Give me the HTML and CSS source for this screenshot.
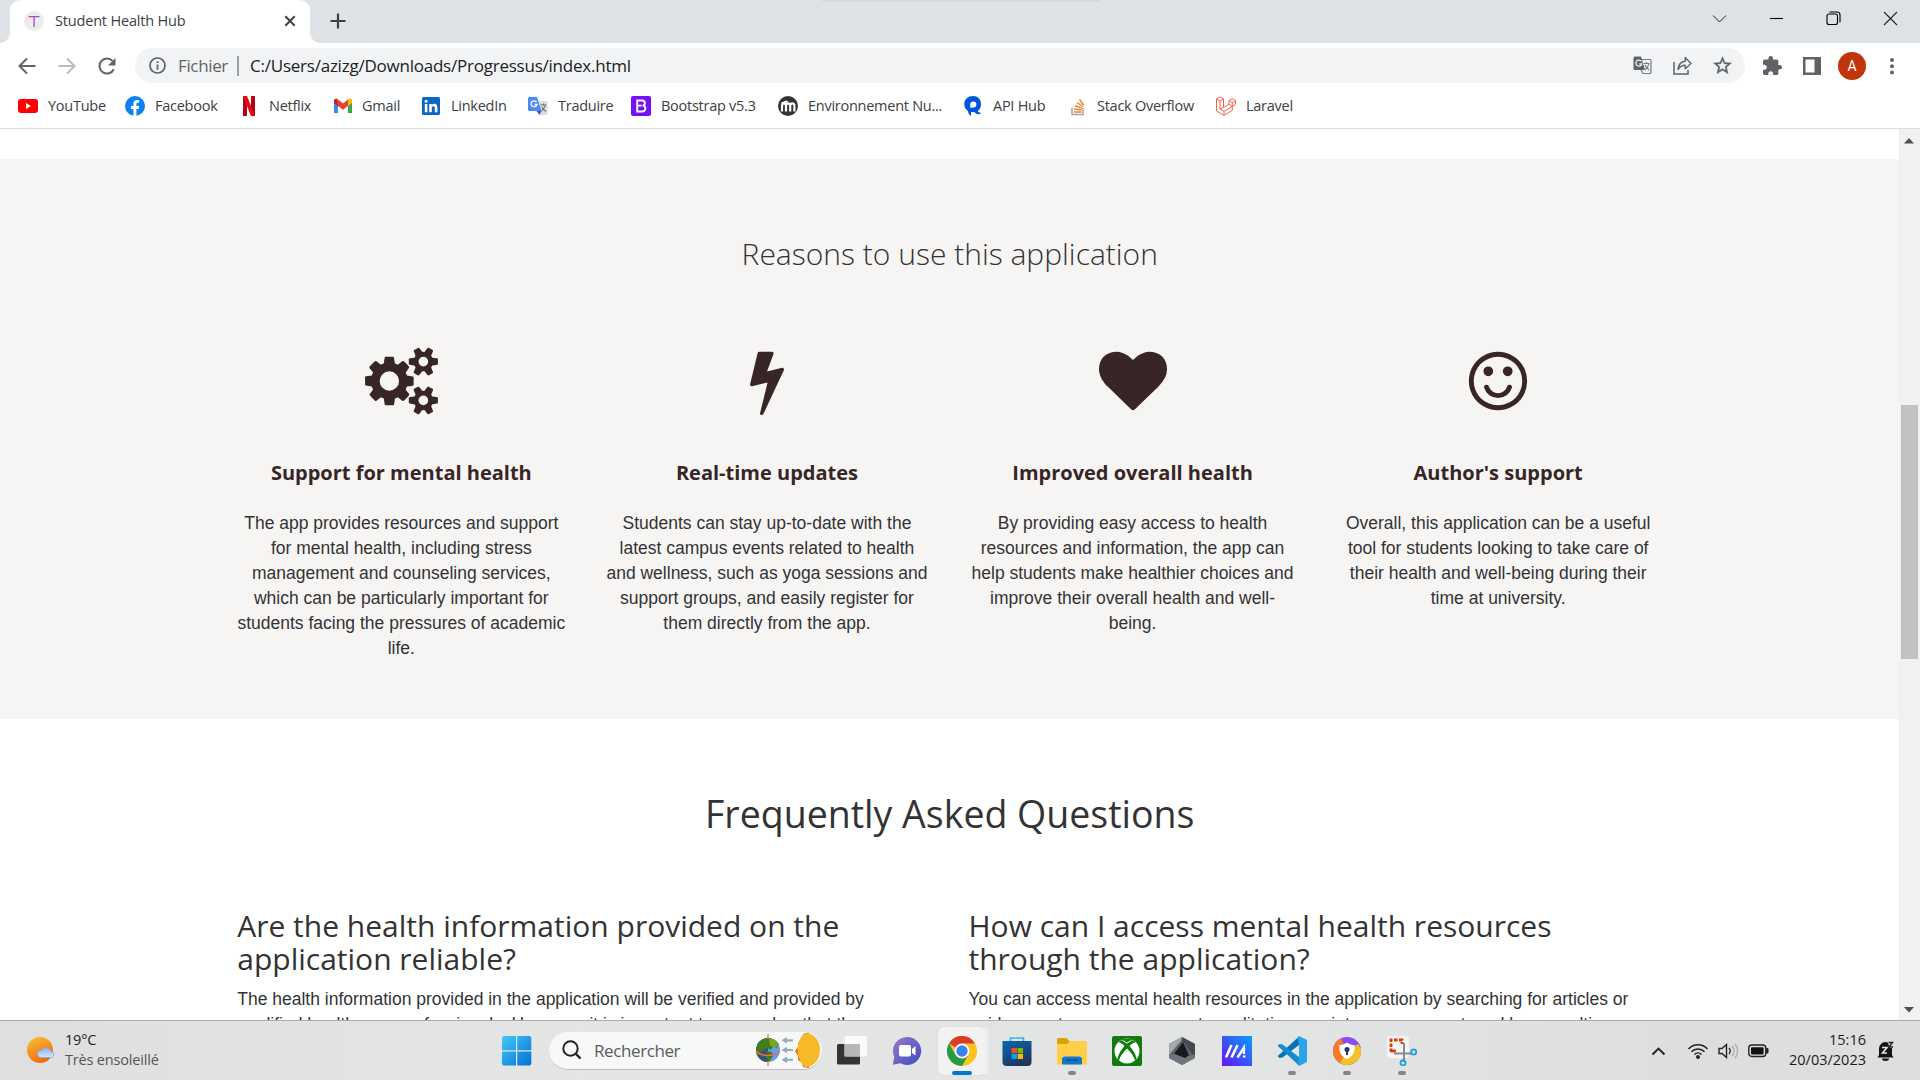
FILE: index.html
```html
<!DOCTYPE html>
<html lang="fr">
<head>
<meta charset="utf-8">
<title>Student Health Hub</title>
<link rel="stylesheet" href="styles.css">
</head>
<body>
<div class="screen">
  <header class="tabstrip">
    <div class="tab">
      <span class="favicon"><svg width="20" height="20" viewBox="0 0 20 20"><defs><linearGradient id="tg" x1="0" x2="1"><stop offset="0" stop-color="#e0359f"/><stop offset="1" stop-color="#6a5cff"/></linearGradient></defs><circle cx="10" cy="10" r="10" fill="#ececee"/><path d="M4.500 5h11v1.300H4.500z M9.400 6h1.300v10H9.400z" fill="url(#tg)"/></svg></span>
      <span class="tab-title">Student Health Hub</span>
      <svg class="tab-close" width="12" height="12" viewBox="0 0 12 12"><path d="M1.300 1.300l9.400 9.400M10.700 1.300L1.300 10.700" stroke="#3c4043" stroke-width="2"/></svg>
    </div>
    <svg class="new-tab" width="16" height="16" viewBox="0 0 16 16"><path d="M8 .5v15M.5 8h15" stroke="#3c4043" stroke-width="2.200"/></svg>
    <span class="snap-hint"></span>
    <div class="window-buttons">
      <svg width="15" height="15" viewBox="0 0 15 15"><path d="M1 4.500l6.500 6.500L14 4.500" fill="none" stroke="#222"/></svg>
      <svg width="15" height="15" viewBox="0 0 15 15"><path d="M1 7.500h13" stroke="#000" stroke-width="1.100"/></svg>
      <svg width="15" height="15" viewBox="0 0 15 15"><g fill="none" stroke="#000" stroke-width="1.100"><rect x="1" y="3" width="10.500" height="10.500" rx="2"/><path d="M3.500 1h7.500a3 3 0 0 1 3 3v7.500"/></g></svg>
      <svg width="15" height="15" viewBox="0 0 15 15"><path d="M1 1l13 13M14 1L1 14" stroke="#222" stroke-width="1.100"/></svg>
    </div>
  </header>

  <div class="toolbar">
    <div class="nav">
      <svg width="18" height="18" viewBox="0 0 18 18"><path d="M17.500 9H2M9 1.500L1.500 9 9 16.500" fill="none" stroke="#5f6368" stroke-width="2"/></svg>
      <svg width="18" height="18" viewBox="0 0 18 18"><path d="M.5 9H16M9 1.500L16.500 9 9 16.500" fill="none" stroke="#babcbe" stroke-width="2"/></svg>
      <svg width="18" height="18" viewBox="0 0 18 18"><path d="M15.800 12.200A7.500 7.500 0 1 1 14.500 3.900" fill="none" stroke="#5f6368" stroke-width="2"/><path d="M17.500 1v7.500H10z" fill="#5f6368"/></svg>
    </div>
    <div class="omnibox">
      <svg width="17" height="17" viewBox="0 0 17 17"><circle cx="8.500" cy="8.500" r="7.500" fill="none" stroke="#5f6368" stroke-width="1.700"/><path d="M7.600 4.300h1.800v1.800H7.600zM7.600 7.500h1.800v5.200H7.600z" fill="#5f6368"/></svg>
      <span class="scheme">Fichier</span>
      <span class="divider"></span>
      <span class="url">C:/Users/azizg/Downloads/Progressus/index.html</span>
      <div class="omni-actions">
        <svg width="19" height="19" viewBox="0 0 19 19"><path d="M8 3.500h9a1 1 0 0 1 1 1v12a1 1 0 0 1-1 1h-7L8 14" fill="none" stroke="#777b80" stroke-width="1.200"/><path d="M2 .5h6l4 13.500H2A1.500 1.500 0 0 1 .5 12.500V2A1.500 1.500 0 0 1 2 .5z" fill="#5f6368"/><path d="M8.300 5.300A3 3 0 1 0 8.800 7.800H6.200" fill="none" stroke="#f1f3f4" stroke-width="1.300"/><path d="M10.500 7.500h6M13.500 6v1.500M15.800 8c-.5 2.500-2 4.500-4 6M12 9c.8 2 2.200 3.500 4.200 5" fill="none" stroke="#777b80" stroke-width="1.100"/></svg>
        <svg width="19" height="19" viewBox="0 0 19 19"><path d="M1 6v12h14v-4" fill="none" stroke="#5f6368" stroke-width="1.500"/><path d="M5 13.500C5.500 8.500 8 5.500 12.200 5.200V1.500L18 7.500l-5.800 5.200V9.300C9 9.300 7 10.500 5 13.500z" fill="none" stroke="#5f6368" stroke-width="1.400" stroke-linejoin="round"/></svg>
        <svg width="19" height="19" viewBox="1.500 1.500 21 21"><path d="M22 9.240l-7.190-.62L12 2 9.190 8.630 2 9.240l5.460 4.730L5.820 21 12 17.270 18.180 21l-1.630-7.030L22 9.240zM12 15.400l-3.760 2.270 1-4.280-3.320-2.880 4.380-.38L12 6.100l1.710 4.040 4.380.38-3.320 2.880 1 4.280L12 15.400z" fill="#5f6368" stroke="#5f6368" stroke-width=".4"/></svg>
      </div>
    </div>
    <div class="extras">
      <svg width="19" height="19" viewBox="2 1 21 21"><path d="M20.500 11H19V7c0-1.100-.9-2-2-2h-4V3.500a2.500 2.500 0 0 0-5 0V5H4c-1.100 0-1.990.9-1.990 2v3.800H3.500c1.490 0 2.700 1.210 2.700 2.700s-1.210 2.700-2.700 2.700H2V20c0 1.100.9 2 2 2h3.800v-1.500c0-1.490 1.210-2.700 2.700-2.700s2.700 1.210 2.700 2.700V22H17c1.100 0 2-.9 2-2v-4h1.500a2.500 2.500 0 0 0 0-5z" fill="#5f6368"/></svg>
      <svg width="18" height="18" viewBox="0 0 18 18"><path d="M0 0h18v18H0zM2.500 2.500v13h9v-13z" fill="#5f6368" fill-rule="evenodd"/></svg>
      <span class="avatar">A</span>
      <svg width="4" height="18" viewBox="0 0 4 18"><g fill="#5f6368"><circle cx="2" cy="3" r="2"/><circle cx="2" cy="9.200" r="2"/><circle cx="2" cy="15.400" r="2"/></g></svg>
    </div>
  </div>

  <nav class="bookmarks">
    <a><svg width="20" height="20" viewBox="0 0 20 20"><rect y="3" width="20" height="14" rx="3" fill="#f00"/><path d="M8 7l5 3-5 3z" fill="#fff"/></svg><span>YouTube</span></a>
    <a><svg width="20" height="20" viewBox="0 0 20 20"><circle cx="10" cy="10" r="10" fill="#0d80f2"/><path d="M8.400 20v-7H6v-3h2.400V8c0-2.600 1.500-4 3.800-4 1 0 1.900.2 1.900.2v2.500h-1.200c-1.200 0-1.500.7-1.500 1.500V10h2.700l-.5 3h-2.200v7z" fill="#fff"/></svg><span>Facebook</span></a>
    <a><svg width="20" height="20" viewBox="0 0 20 20"><path d="M4 0h4v20H4zM12 0h4v20h-4z" fill="#b20710"/><path d="M4 0h4l8 20h-4z" fill="#e50914"/></svg><span>Netflix</span></a>
    <a><svg width="20" height="20" viewBox="-1 0 20 20"><path d="M1 5v12h4V8z" fill="#4285f4"/><path d="M19 5v12h-4V8z" fill="#34a853"/><path d="M1 5c0-2.400 2.500-2.700 4-1.500l5 4 5-4c1.500-1.200 4-.9 4 1.500v2l-9 6.800L1 7z" fill="#ea4335"/><path d="M15 3.500c1.500-1.200 4-.9 4 1.500v2l-4 3z" fill="#fbbc04"/><path d="M1 5c0-2 1.700-2.500 2.800-2L5 10 1 7z" fill="#c5221f"/></svg><span>Gmail</span></a>
    <a><svg width="20" height="20" viewBox="0 0 20 20"><rect x="1" y="1" width="18" height="18" rx="1.500" fill="#0a66c2"/><path d="M3.800 8h2.600v8.300H3.800zM8.200 8h2.500v1.200c1.500-2.200 5.700-1.900 5.700 2.100v5h-2.600v-4.500c0-2.300-3-2.100-3 0v4.500H8.200z" fill="#fff"/><circle cx="5.100" cy="5.200" r="1.500" fill="#fff"/></svg><span>LinkedIn</span></a>
    <a><svg width="20" height="20" viewBox="0 0 20 20"><path d="M8 5h10.500a1 1 0 0 1 1 1v12a1 1 0 0 1-1 1H12z" fill="#dcdcdc"/><path d="M1.500 1H9l4.500 14H1.500A1.500 1.500 0 0 1 0 13.500v-11A1.500 1.500 0 0 1 1.500 1z" fill="#4c8bf5"/><path d="M8.500 15h5L11.500 19z" fill="#3a5dbb"/><path d="M8.500 6A3 3 0 1 0 9 8.500H6.500" fill="none" stroke="#fff" stroke-width="1.300"/><path d="M12.500 9h6M15.500 7.500V9M17.500 9c-.5 2.500-2 4-4 6M14 11c.8 2 2 3 4 4.500" fill="none" stroke="#6b7177" stroke-width="1.100"/></svg><span>Traduire</span></a>
    <a><svg width="20" height="20" viewBox="0 0 20 20"><rect width="20" height="20" rx="2" fill="#7611f7"/><path d="M6.200 4.500h4.600c4 0 3.800 4.500 1 5 3.600.6 3.600 6-1 6H6.200zM6.200 9.600h4.500" fill="none" stroke="#fff" stroke-width="1.900"/></svg><span>Bootstrap v5.3</span></a>
    <a><svg width="20" height="20" viewBox="0 0 20 20"><circle cx="10" cy="10" r="10" fill="#333"/><path d="M4 15.500V10c0-3.500 4-3.500 4 0v5.500M8 10c0-3.500 4.200-3.500 4.200 0v5.500M12.200 10c0-3.500 4.200-3.500 4.200 0v5.500" fill="none" stroke="#fff" stroke-width="2.200"/><path d="M2.500 7L8 4.500l2.500 1L6 8z" fill="#fff"/></svg><span>Environnement Nu...</span></a>
    <a><svg width="20" height="20" viewBox="0 0 20 20"><path d="M10 0c5 0 8 3.300 8 8.200 0 3-1 5.200-3.300 6.800.7 1.500 2 1.800 3.300 1.700-1 2-4.500 2.200-6.300-.4L8 16v4c-2-1-2.800-3-3-5-2.500-1.500-3.700-4-3.700-7C1.300 3.300 5 0 10 0z" fill="#0055da"/><path d="M8 11V8.500a2.300 2.300 0 1 1 2.500 2.300z" fill="#fff" stroke="#fff" stroke-width="1.500"/></svg><span>API Hub</span></a>
    <a><svg width="20" height="20" viewBox="-1 0 20 20"><path d="M4 12v6.500h11V12" fill="none" stroke="#9ea5ac" stroke-width="1.500"/><path d="M6 16h7.500M6.200 13l7.400 1M7 9.700l7 2.400M8.800 6.500l6 4M11.500 3.500l4.200 5.700" stroke="#f48024" stroke-width="1.500"/></svg><span>Stack Overflow</span></a>
    <a><svg width="20" height="20" viewBox="0 0 20 20"><path d="M.5 3L4 1l3.500 2v8.500l5.500-3.200V4.500l3.300-2 3.200 2v4l-3.200 2v3.800L8 19.300.5 15zM.5 3L4 5l3.500-2M4 5v8l4 2.300 8.300-4.800L13 8.300M8 15.300v4M4 13l3.500-1.500M13 4.500l3.300 2 3.200-2M16.300 6.500v4" fill="none" stroke="#f9614f" stroke-width="1" stroke-linejoin="round"/></svg><span>Laravel</span></a>
  </nav>

  <div class="viewport">
    <main class="page">
      <section class="reasons">
        <h2>Reasons to use this application</h2>
        <div class="features">
          <article>
            <svg width="73" height="68" viewBox="-64 0 1920 1792"><path d="M832 896q0-106-75-181t-181-75-181 75-75 181 75 181 181 75 181-75 75-181zm768 512q0-52-38-90t-90-38-90 38-38 90q0 53 37.500 90.500t90.500 37.500 90.500-37.500 37.500-90.500zm0-1024q0-52-38-90t-90-38-90 38-38 90q0 53 37.500 90.500t90.500 37.500 90.500-37.500 37.500-90.500zm-384 421v185q0 10-7 19.500t-16 10.500l-155 24q-11 35-32 76 34 48 90 115 7 11 7 20 0 12-7 19-23 30-82.500 89.500t-78.500 59.500q-11 0-21-7l-115-90q-37 19-77 31-11 108-23 155-7 24-30 24h-186q-11 0-20-7.500t-10-17.500l-23-153q-34-10-75-31l-118 89q-7 7-20 7-11 0-21-8-144-133-144-160 0-9 7-19 10-14 41-53t47-61q-23-44-35-82l-152-24q-10-1-17-9.500t-7-19.500v-185q0-10 7-19.500t16-10.500l155-24q11-35 32-76-34-48-90-115-7-11-7-20 0-12 7-20 22-30 82-89t79-59q11 0 21 7l115 90q34-18 77-32 11-108 23-154 7-24 30-24h186q11 0 20 7.500t10 17.500l23 153q34 10 75 31l118-89q8-7 20-7 11 0 21 8 144 133 144 160 0 8-7 19-12 16-42 54t-45 60q23 48 34 82l152 23q10 2 17 10.500t7 19.500zm640 533v140q0 16-149 31-12 27-30 52 51 113 51 138 0 4-4 7-122 71-124 71-8 0-46-47t-52-68q-20 2-30 2t-30-2q-14 21-52 68t-46 47q-2 0-124-71-4-3-4-7 0-25 51-138-18-25-30-52-149-15-149-31v-140q0-16 149-31 13-29 30-52-51-113-51-138 0-4 4-7 4-2 35-20t59-34 30-16q8 0 46 46.500t52 67.500q20-2 30-2t30 2q51-71 92-112l6-2q4 0 124 70 4 3 4 7 0 25-51 138 17 23 30 52 149 15 149 31zm0-1024v140q0 16-149 31-12 27-30 52 51 113 51 138 0 4-4 7-122 71-124 71-8 0-46-47t-52-68q-20 2-30 2t-30-2q-14 21-52 68t-46 47q-2 0-124-71-4-3-4-7 0-25 51-138-18-25-30-52-149-15-149-31v-140q0-16 149-31 13-29 30-52-51-113-51-138 0-4 4-7 4-2 35-20t59-34 30-16q8 0 46 46.500t52 67.500q20-2 30-2t30 2q51-71 92-112l6-2q4 0 124 70 4 3 4 7 0 25-51 138 17 23 30 52 149 15 149 31z"/></svg>
            <h4>Support for mental health</h4>
            <p>The app provides resources and support for mental health, including stress management and counseling services, which can be particularly important for students facing the pressures of academic life.</p>
          </article>
          <article>
            <svg width="68" height="68" viewBox="0 0 1792 1792"><path d="M1333 566q18 20 7 44l-540 1157q-13 25-42 25-4 0-14-2-17-5-25.500-19t-4.500-30l197-808-406 101q-4 1-12 1-18 0-31-11-18-15-13-39l201-825q4-16 17-26.500t32-10.500h328q19 0 32 12.500t13 29.500q0 8-5 18l-171 463 396-98q8-2 12-2 19 0 34 15z"/></svg>
            <h4>Real-time updates</h4>
            <p>Students can stay up-to-date with the latest campus events related to health and wellness, such as yoga sessions and support groups, and easily register for them directly from the app.</p>
          </article>
          <article>
            <svg width="68" height="68" viewBox="0 0 1792 1792"><path d="M896 1664q-26 0-44-18l-624-602q-10-8-27.500-26t-55.500-65.500-68-97.500-53.500-121-23.500-138q0-220 127-344t351-124q62 0 126.500 21.500t120 58 95.500 68.500 76 68q36-36 76-68t95.500-68.500 120-58 126.500-21.500q224 0 351 124t127 344q0 221-229 450l-623 600q-18 18-44 18z"/></svg>
            <h4>Improved overall health</h4>
            <p>By providing easy access to health resources and information, the app can help students make healthier choices and improve their overall health and well-being.</p>
          </article>
          <article>
            <svg width="68" height="68" viewBox="0 0 1792 1792"><path d="M1262 1075q-37 121-138 195t-228 74-228-74-138-195q-8-25 4-48.500t38-31.500q25-8 48.500 4t31.500 38q25 80 92.500 129.500t151.500 49.500 151.500-49.500 92.500-129.500q8-26 32-38t49-4 37 31.500 4 48.500zm-494-435q0 53-37.500 90.500t-90.500 37.500-90.500-37.500-37.500-90.500 37.500-90.500 90.500-37.500 90.500 37.500 37.500 90.500zm512 0q0 53-37.500 90.500t-90.500 37.500-90.500-37.500-37.500-90.500 37.500-90.500 90.500-37.500 90.500 37.500 37.500 90.500zm256 256q0-130-51-248.500t-136.500-204-204-136.500-248.500-51-248.500 51-204 136.500-136.500 204-51 248.500 51 248.500 136.500 204 204 136.500 248.500 51 248.500-51 204-136.500 136.500-204 51-248.500zm128 0q0 209-103 385.500t-279.500 279.500-385.500 103-385.500-103-279.500-279.500-103-385.500 103-385.500 279.500-279.500 385.500-103 385.500 103 279.500 279.500 103 385.500z"/></svg>
            <h4>Author's support</h4>
            <p>Overall, this application can be a useful tool for students looking to take care of their health and well-being during their time at university.</p>
          </article>
        </div>
      </section>
      <section class="faq">
        <h2>Frequently Asked Questions</h2>
        <div class="questions">
          <article>
            <h3>Are the health information provided on the application reliable?</h3>
            <p>The health information provided in the application will be verified and provided by<br>qualified health care professionals. However, it is important to remember that the</p>
          </article>
          <article>
            <h3>How can I access mental health resources through the application?</h3>
            <p>You can access mental health resources in the application by searching for articles or<br>guides on stress management, meditation, anxiety management, and by consulting</p>
          </article>
        </div>
      </section>
    </main>
    <aside class="scrollbar">
      <svg width="10" height="6" viewBox="0 0 10 6"><path d="M5 0l5 5.500H0z" fill="#505050"/></svg>
      <span class="thumb"></span>
      <svg class="down" width="10" height="6" viewBox="0 0 10 6"><path d="M5 5.500L10 0H0z" fill="#505050"/></svg>
    </aside>
  </div>

  <footer class="taskbar">
    <div class="weather">
      <svg width="29" height="28" viewBox="0 0 29 28"><defs><linearGradient id="sun" x1=".2" x2=".7" y2="1"><stop offset="0" stop-color="#f5bd35"/><stop offset="1" stop-color="#f0650a"/></linearGradient><linearGradient id="cl" x2="0" y2="1"><stop offset="0" stop-color="#8eb4ee"/><stop offset="1" stop-color="#d7e6ff"/></linearGradient></defs><circle cx="13" cy="13" r="13" fill="url(#sun)"/><path d="M14 20.500a3.500 3.500 0 0 1 0-7 6 6 0 0 1 10.500 1.300 3 3 0 0 1 .5 5.700z" fill="url(#cl)" stroke="#7da5e6" stroke-width=".7"/></svg>
      <div class="forecast"><div class="temp">19°C</div><div class="cond">Très ensoleillé</div></div>
    </div>
    <div class="apps">
      <svg class="start" width="30" height="30" viewBox="0 0 30 30"><defs><linearGradient id="win" x2="1" y2="1"><stop offset="0" stop-color="#45c8fa"/><stop offset="1" stop-color="#0271d2"/></linearGradient></defs><path d="M1.500 0H14v14.200H0V1.500zM15.200 0h12.600l1.500 1.500v12.700H15.200zM0 15.500h14v14H1.500L0 28zM15.200 15.500h14.100V28l-1.500 1.500H15.200z" fill="url(#win)"/></svg>
      <div class="search">
        <svg width="20" height="20" viewBox="0 0 20 20"><circle cx="8.500" cy="8.500" r="7.200" fill="none" stroke="#222" stroke-width="2"/><path d="M13.500 13.500l5 5" stroke="#222" stroke-width="2.400"/></svg>
        <span>Rechercher</span>
        <svg class="doodle" width="67" height="38" viewBox="0 0 67 38"><defs><clipPath id="globe"><circle cx="13" cy="19" r="12"/></clipPath></defs><circle cx="13" cy="19" r="12" fill="#659ee6"/><g clip-path="url(#globe)"><path d="M0 6h13v26H0z" fill="#375378"/><path d="M2 15l4-7 7-2 7 0 5 6-3 5-4-2-2 4-4-2-3 2-5 3-1 4-3-3zM12 20l5 1 1 4-4 6-3-5z" fill="#3f7d1d"/><path d="M14 8l6-1 5 7-4 2-6-1z" fill="#7fa51d"/></g><path d="M13 3v5M13 30v5M1 20c5 6 18 6 24 0" fill="none" stroke="#ee6b50" stroke-width="1.300"/><path d="M38 8.300h-6V6l-5.500 3.300 5.500 3.300v-2h6zM38 18h-6v-2.300L26.500 19l5.500 3.300V20h6zM38 27.700h-6v-2.300l-5.500 3.300L32 32v-2.300h6z" fill="#92aac6"/><path d="M54 1l-6 2-1 5-4 4 0 4-3 4 3 5 0 4 4 3 1 4 6 1z" fill="#e96a12"/><path d="M50 2C70 2 70 36 50 36 40 28 40 10 50 2z" fill="#f6b92a"/></svg>
      </div>
      <div class="app"><svg width="30" height="30" viewBox="0 0 30 30"><rect y="8" width="23" height="20.500" rx="1.500" fill="#333"/><rect x="7.500" y="0" width="22.500" height="20.500" rx="1.500" fill="#fff" opacity=".8"/><path d="M7.500 8H23v12.500H7.500z" fill="#b6b6b6"/></svg></div>
      <div class="app"><svg width="30" height="30" viewBox="0 0 30 30"><defs><linearGradient id="chat" x2="1" y2="1"><stop offset="0" stop-color="#9b7ac5"/><stop offset="1" stop-color="#3e4ac4"/></linearGradient></defs><path d="M15 1a14 14 0 1 1-6.500 26.300L.8 28.700 2.300 21A14 14 0 0 1 15 1z" fill="url(#chat)"/><rect x="7" y="9" width="12" height="11.500" rx="2" fill="#fff"/><path d="M20 13l3.500-3v9.500L20 17z" fill="#fff"/></svg></div>
      <div class="app active"><svg width="30" height="30" viewBox="0 0 30 30"><circle cx="15" cy="15" r="15" fill="#fcc31e"/><path d="M15 15L2 7.500A15 15 0 0 1 28 7.500H15z" fill="#dc3a2d"/><path d="M2 7.500A15 15 0 0 0 15 30l6.500-11.200L15 15l-6.500 3.800z" fill="#269a48"/><circle cx="15" cy="15" r="7.500" fill="#fff"/><circle cx="15" cy="15" r="5.700" fill="#3c82f0"/></svg></div>
      <div class="app"><svg width="30" height="30" viewBox="0 0 30 30"><defs><linearGradient id="store" x2=".5" y2="1"><stop offset="0" stop-color="#0a66b2"/><stop offset="1" stop-color="#20365f"/></linearGradient></defs><path d="M8.500 6V2h13v4" fill="none" stroke="#2eb5f0" stroke-width="1.700"/><path d="M.5 5h29v21a4 4 0 0 1-4 4h-21a4 4 0 0 1-4-4z" fill="url(#store)"/><path d="M9.500 12H15v5.200H9.500z" fill="#f25022"/><path d="M15.700 12h5.300v5.200h-5.300z" fill="#7fba00"/><path d="M9.500 17.900H15V23H9.500z" fill="#00a4ef"/><path d="M15.700 17.900h5.300V23h-5.300z" fill="#ffb900"/></svg></div>
      <div class="app running"><svg width="30" height="30" viewBox="0 0 30 30"><path d="M0 3.500a1.500 1.500 0 0 1 1.500-1.500h8l3 3H29v10H0z" fill="#dda108"/><path d="M0 8h10l3-3h17v23.500H0z" fill="#ffcf48"/><path d="M5 28.500v-5a3 3 0 0 1 3-3h14a3 3 0 0 1 3 3v5z" fill="#0f76cc"/><path d="M9 24.300h12" stroke="#0b4d92" stroke-width="1.500"/></svg></div>
      <div class="app"><svg width="30" height="30" viewBox="0 0 30 30"><rect width="30" height="30" rx="2" fill="#107c10"/><circle cx="15" cy="15" r="12.500" fill="#fff"/><path d="M8 4.500c3-1 5.500 1 7 2.200 1.500-1.200 4-3.200 7-2.200 -2-2.500-12-2.500-14 0zM15 10c-4 3.500-8 8-8.500 14 2-5 5-8.500 8.500-11.500 3.500 3 6.500 6.500 8.500 11.500C23 18 19 13.500 15 10zM6.500 6.500c2.500 0 4.500 2 6 3.500C9 14 6 18.500 5.500 23l1.500 1.500C8 20 11.500 16 15 12.500c3.500 3.500 7 7.500 8 12l1.500-1.500C24 18.500 21 14 17.500 10c1.500-1.500 3.500-3.500 6-3.500L22 4.500c-3 0-5.500 2-7 3.300C13.500 6.500 11 4.500 8 4.500z" fill="#107c10"/></svg></div>
      <div class="app"><svg width="30" height="30" viewBox="0 0 30 30"><path d="M15 1l13 7v14l-13 7-13-7V8z" fill="#5d6268"/><path d="M15 1L2 8v11L14 5z" fill="#a2a8ad"/><path d="M15 1l13 7v14L16 5z" fill="#454b51"/><path d="M16 6l6 13.500-4 2.500L7 18z" fill="#17191c"/><path d="M2 19l5-1 11 4 4-2.500 6-1V22l-13 7-13-7z" fill="#6f757b"/></svg></div>
      <div class="app"><svg width="30" height="30" viewBox="0 0 30 30"><defs><linearGradient id="asus" x1="0" y1="1" x2="1" y2="0"><stop offset="0" stop-color="#6712fa"/><stop offset="1" stop-color="#079ffc"/></linearGradient></defs><path d="M0 0h30v30H0z" fill="url(#asus)"/><path d="M4 21.500L9.500 9M9.500 21.500L15.500 9" stroke="#fff" stroke-width="2.600"/><path d="M15.500 21.500L22 11.500V18" fill="none" stroke="#fff" stroke-width="2.300"/><circle cx="22.200" cy="20.500" r="1.300" fill="#fff"/></svg></div>
      <div class="app running"><svg width="30" height="30" viewBox="0 0 30 30"><path d="M22 .5L3 18 .5 20l2 2 3-.5L22 9z" fill="#0874b8"/><path d="M22 29.500L3 12 .5 10l2-2 3 .5L22 21z" fill="#168ccc"/><path d="M22 0l8 4v22l-8 4-1.500-1.500L22 22V8l-1.500-6.500z" fill="#28a4ea"/></svg></div>
      <div class="app running"><svg width="30" height="30" viewBox="0 0 30 30"><circle cx="15" cy="15" r="14" fill="#8a4cf0"/><path d="M1 15A14 14 0 0 1 9 2.500L15 15l-5 13A14 14 0 0 1 1 15z" fill="#fb7a25"/><path d="M29 13a14 14 0 0 1-21 14L15 15l11-7z" fill="#f3c128"/><path d="M15 6.500c3 2 5 2.500 7.500 2.500.8 7-1.500 11.500-7.500 14-6-2.500-8.300-7-7.500-14 2.500 0 4.500-.5 7.500-2.500z" fill="#fff"/><circle cx="15" cy="13.500" r="2.500" fill="#2e3060"/><path d="M14 14h2v5h-2z" fill="#2e3060"/></svg></div>
      <div class="app running"><svg width="30" height="30" viewBox="0 0 30 30"><rect width="22" height="22" rx="3" fill="#f4f4f4"/><path d="M4 16V4h11v4" fill="none" stroke="#d83b01" stroke-width="2.800" stroke-dasharray="3.500 1.500"/><path d="M4 15h5" stroke="#d83b01" stroke-width="2.800"/><path d="M17 7v17M7 17.500h17" stroke="#858b90" stroke-width="2"/><g fill="none" stroke="#1c9de0" stroke-width="1.800"><circle cx="26.700" cy="16" r="2.600"/><circle cx="16" cy="27" r="2.500"/></g></svg></div>
    </div>
    <div class="tray">
      <svg width="15" height="10" viewBox="0 0 15 10"><path d="M1.500 8.500l6-6 6 6" fill="none" stroke="#222" stroke-width="1.900"/></svg>
      <svg class="wifi" width="22" height="18" viewBox="0 0 22 18"><g fill="none" stroke="#222" stroke-width="1.500"><path d="M1.500 7a13 13 0 0 1 19 0M4.500 9.800a9 9 0 0 1 13 0M7.500 12.500a5 5 0 0 1 7 0"/></g><circle cx="11" cy="15" r="2" fill="#222"/></svg>
      <svg class="volume" width="21" height="18" viewBox="0 0 21 18"><path d="M1 6.500h3L8.500 2.500v13L4 11.500H1z" fill="none" stroke="#222" stroke-width="1.400"/><path d="M11 6c1.500 1.800 1.500 4.200 0 6" fill="none" stroke="#222" stroke-width="1.300"/><path d="M14 4c2.600 3 2.600 7 0 10M17 2c3.500 4 3.500 10 0 14" fill="none" stroke="#aaa" stroke-width="1.300"/></svg>
      <svg class="battery" width="21" height="14" viewBox="0 0 21 14"><rect x=".8" y="1" width="17" height="11.500" rx="3" fill="none" stroke="#222" stroke-width="1.400"/><rect x="3" y="3.200" width="12.600" height="7.200" rx="1" fill="#111"/><path d="M18.500 4.500h1.500v4.500h-1.500z" fill="#222" stroke="#222"/></svg>
      <div class="clock"><div>15:16</div><div>20/03/2023</div></div>
      <svg class="bell" width="20" height="22" viewBox="0 0 20 22"><path d="M3 15V8.500a6.500 6.500 0 0 1 13 0V15l1.500 2.500h-16zM6 18.500h7a3.500 2.500 0 0 1-7 0z" fill="#151515"/><path d="M6 7.500h5L6.500 13H11" fill="none" stroke="#e5e5e5" stroke-width="1.600"/><path d="M11.500 1h7v7h-5z" fill="#dfdfdf"/><path d="M12.500 2.500h4L13 7h4" fill="none" stroke="#222" stroke-width="1.400"/></svg>
    </div>
  </footer>
</div>
</body>
</html>
```
FILE: styles.css
```css
* { box-sizing: border-box; }
body, h2, h3, h4, p { margin: 0; }
svg { display: block; flex: none; }
body { background: #fff; overflow: hidden; }
.screen {
  width: 1920px; height: 1080px; overflow: hidden;
  display: flex; flex-direction: column;
  font-family: "Open Sans", "Noto Sans", sans-serif; color: #3c4043;
}

/* tab strip */
.tabstrip { height: 43px; flex: none; display: flex; background: #dee1e6; padding-left: 10px; }
.tab {
  position: relative; width: 300px; height: 43px; padding: 0 14px 2px; background: #fff;
  border-radius: 10px 10px 0 0; display: flex; align-items: center; font-size: 14.5px;
}
.tab::before, .tab::after {
  content: ""; position: absolute; bottom: 0; width: 10px; height: 10px;
}
.tab::before { left: -10px; background: radial-gradient(circle at 0 0, transparent 9.5px, #fff 10px); }
.tab::after { right: -10px; background: radial-gradient(circle at 100% 0, transparent 9.5px, #fff 10px); }
.favicon { margin-right: 11px; }
.tab-title { letter-spacing: -.18px; }
.tab-close { margin-left: auto; }
.new-tab { margin: 13px 0 0 20px; }
.snap-hint { margin-left: 476px; width: 278px; height: 2px; background: #d6d9df; }
.window-buttons { margin: 11px 22px 0 auto; display: flex; gap: 42px; }

/* toolbar */
.toolbar { height: 45px; flex: none; display: flex; align-items: center; padding: 0 26px 0 18px; }
.nav { display: flex; gap: 22px; }
.omnibox {
  margin-left: 19px; width: 1610px; height: 35px; border-radius: 18px; background: #f1f3f4;
  display: flex; align-items: center; padding: 0 13px 0 14px; font-size: 17px; white-space: nowrap;
}
.scheme { width: 60px; padding-left: 12px; box-sizing: content-box; color: #5f6368; letter-spacing: -.35px; }
.divider { width: 2px; height: 20px; background: #9aa0a6; margin-left: -1px; }
.url { margin-left: 11px; color: #202124; letter-spacing: -.23px; }
.omni-actions { margin-left: auto; display: flex; gap: 21px; }
.extras { margin-left: auto; display: flex; align-items: center; }
.extras > :nth-child(2) { margin-left: 21px; }
.avatar {
  margin: 0 24px 0 17px; width: 28px; height: 28px; border-radius: 50%; background: #c1350c;
  color: #fff; font: 14px/28px Roboto, sans-serif; text-align: center;
}

/* bookmarks */
.bookmarks {
  height: 41px; flex: none; padding: 0 0 5px 18px; border-bottom: 1px solid #dadce0;
  display: grid; grid-template-columns: 107px 114px 93px 89px 107px 103px 147px 185px 104px 149px 100px;
  align-items: center; font-size: 14.5px;
}
.bookmarks a { display: flex; align-items: center; gap: 10px; white-space: nowrap; letter-spacing: -.26px; }

/* web page */
.viewport { height: 891px; flex: none; display: flex; overflow: hidden; }
.page { width: 1899px; padding-top: 30px; color: #333; }
.page p { font: 17.5px/25px "Liberation Sans", Arial, sans-serif; }
.reasons { height: 560px; background: #f6f5f4; padding: 78px 218px 0 218.5px; text-align: center; }
.reasons h2 { font-size: 30px; font-weight: 300; line-height: 33px; }
.features { margin-top: 77px; display: grid; grid-template-columns: repeat(4, 1fr); }
.features article { padding: 0 18.5px; display: flex; flex-direction: column; align-items: center; }
.features svg { fill: #382526; }
.features h4 { margin: 47px 0 27px; font-size: 20px; font-weight: 700; line-height: 22px; color: #382526; }
.faq { padding: 74px 218px 0 218.5px; }
.faq h2 { font-size: 37.5px; font-weight: 400; line-height: 42px; text-align: center; }
.questions { margin-top: 74px; display: grid; grid-template-columns: repeat(2, 1fr); }
.questions article { padding: 0 18.75px; }
.questions h3 { font-size: 30px; font-weight: 400; line-height: 33px; margin-bottom: 12px; }
.questions p { white-space: nowrap; }

.scrollbar { width: 21px; background: #f1f1f1; display: flex; flex-direction: column; align-items: center; padding: 9px 1px 7px 0; }
.thumb { margin-top: 261px; width: 17px; height: 254px; background: #c1c1c1; }
.down { margin-top: auto; }

/* taskbar */
.taskbar {
  height: 60px; flex: none; display: flex; align-items: center; border-top: 1px solid #acacac;
  background: linear-gradient(90deg, #dfdfdf, #e4e6e6 30%, #e3e4e4 65%, #dedede 90%);
}
.weather { width: 502px; padding-left: 27px; display: flex; align-items: center; gap: 9px; font-size: 14.5px; line-height: 20px; letter-spacing: -.18px; }
.forecast { padding-bottom: 2px; }
.temp { color: #222; }
.cond { color: #555; }
.apps { display: flex; align-items: center; }
.search {
  margin: 0 3px 0 17px; width: 273px; height: 38px; border-radius: 19px; background: #f7f8f8;
  border-bottom: 1px solid #bcbcbc; display: flex; align-items: center; padding-left: 13px;
  font-size: 17px; color: #5c5c5c; letter-spacing: -.4px; overflow: hidden;
}
.search span { margin-left: 12px; }
.doodle { margin-left: auto; }
.app { position: relative; width: 48px; height: 48px; margin: 0 7px 0 0; display: grid; place-items: center; }
.search + .app { margin-left: 3px; }
.active { background: #f2f2f2; border-radius: 5px; box-shadow: 4px 0 0 -1px #ececec, 0 0 1px #aaa; }
.active::after, .running::after {
  content: ""; position: absolute; bottom: 0; left: 20px; width: 8px; height: 4px; border-radius: 2px; background: #858585;
}
.active::after { left: 14px; width: 20px; background: #0078d4; }
.tray { margin-left: auto; display: flex; align-items: center; padding-right: 24px; }
.wifi { margin-left: 21px; }
.volume { margin-left: 9px; }
.battery { margin-left: 9px; }
.clock { width: 98px; padding: 0 1px 2px 0; text-align: right; font-size: 14.5px; line-height: 20px; color: #1c1c1c; letter-spacing: 0; }
.bell { margin-left: 9px; }
```
